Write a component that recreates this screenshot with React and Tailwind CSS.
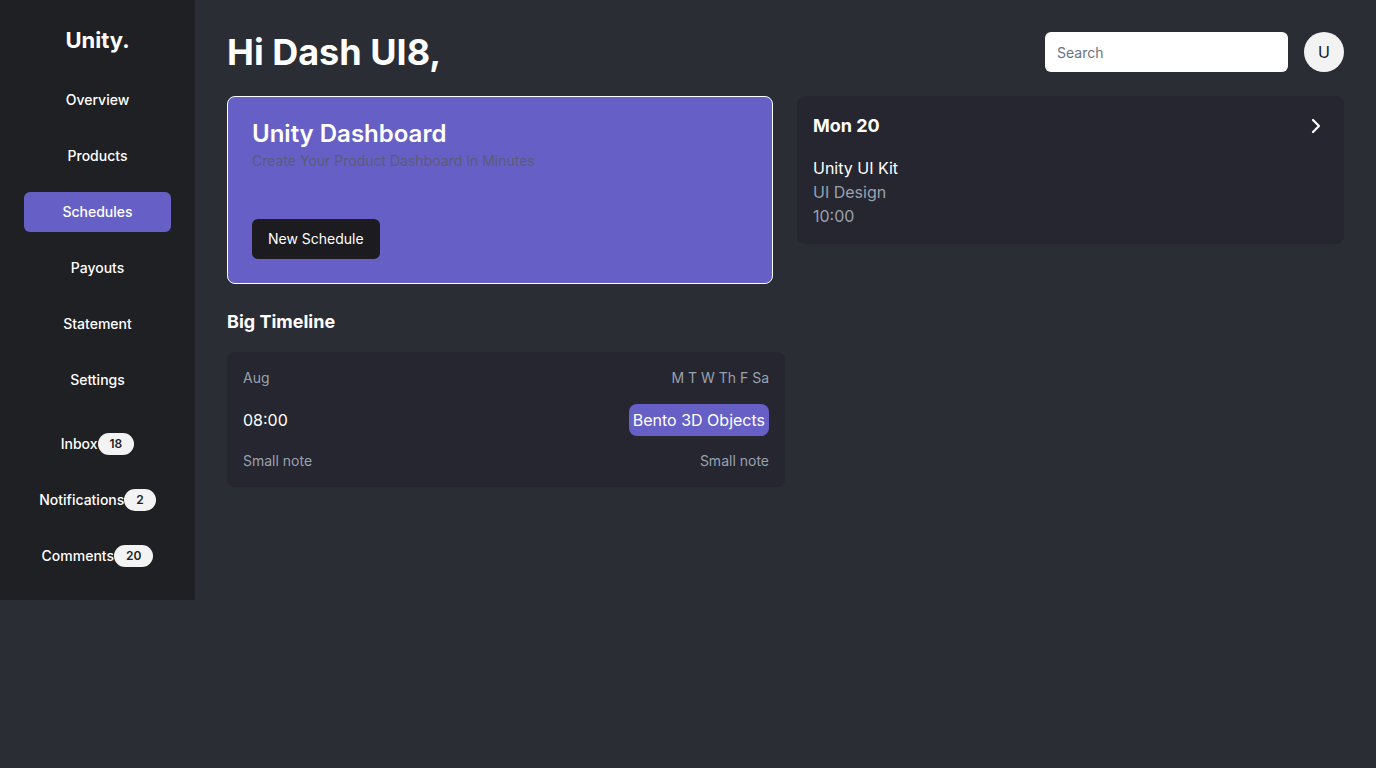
import { ChevronRight } from 'lucide-react';

const navItems = ['Overview', 'Products', 'Schedules', 'Payouts', 'Statement', 'Settings'];
const badgeItems = [
  { label: 'Inbox', count: 18 },
  { label: 'Notifications', count: 2 },
  { label: 'Comments', count: 20 },
];

const Sidebar = () => (
  <aside className="w-[195px] h-[600px] shrink-0 bg-[#1f2024] px-6 pt-[26px]">
    <div className="text-center text-[22px] font-bold text-white leading-[28px]">Unity.</div>
    <nav className="mt-[26px] flex flex-col gap-4">
      {navItems.map((item) => (
        <a
          key={item}
          className={`h-10 flex items-center justify-center rounded-md text-sm font-medium text-white ${
            item === 'Schedules' ? 'bg-[#6660c6]' : ''
          }`}
        >
          {item}
        </a>
      ))}
    </nav>
    <div className="mt-6 flex flex-col gap-4">
      {badgeItems.map(({ label, count }) => (
        <a key={label} className="h-10 flex items-center justify-center text-sm font-medium text-white">
          {label}
          <span className="h-[22px] px-3 flex items-center rounded-full bg-[#f3f3f4] text-xs font-semibold text-[#1f2024]">
            {count}
          </span>
        </a>
      ))}
    </div>
  </aside>
);

const App = () => {
  return (
    <div
      className="min-h-[768px] flex items-start bg-[#2b2d35]"
      style={{ fontFamily: 'Inter, "Noto Sans", sans-serif' }}
    >
      <Sidebar />
      <main className="flex-1 px-8 pt-8">
        <header className="flex items-center justify-between h-10">
          <h1 className="text-4xl font-bold text-white">Hi Dash UI8,</h1>
          <div className="flex items-center gap-4">
            <input
              placeholder="Search"
              className="w-[243px] h-10 rounded-md bg-white px-3 text-sm text-gray-900 placeholder:text-gray-500 outline-none"
            />
            <div className="w-10 h-10 rounded-full bg-[#f3f3f4] flex items-center justify-center text-base text-gray-900">
              U
            </div>
          </div>
        </header>

        <div className="mt-6 flex gap-6 items-start">
          <div className="w-[546px] shrink-0">
            <section className="h-[188px] rounded-lg border border-white bg-[#6660c6] p-6">
              <h2 className="text-2xl font-semibold text-white leading-[24px] mt-[1px]">Unity Dashboard</h2>
              <p className="mt-[5px] text-sm text-[#5b5b78]">Create Your Product Dashboard In Minutes</p>
              <button className="mt-[48px] h-10 px-4 rounded-md bg-[#1c1b1f] text-sm font-normal text-white">
                New Schedule
              </button>
            </section>

            <h3 className="mt-7 text-lg font-bold text-white leading-[20px]">Big Timeline</h3>
            <section className="mt-5 w-[558px] rounded-lg bg-[#25262f] px-4 py-4">
              <div className="flex justify-between text-sm text-gray-400 leading-5">
                <span>Aug</span>
                <span>M T W Th F Sa</span>
              </div>
              <div className="mt-4 flex items-center justify-between">
                <span className="text-base text-white">08:00</span>
                <span className="h-8 px-1 flex items-center rounded-lg bg-[#6660c6] text-base text-white">
                  Bento 3D Objects
                </span>
              </div>
              <div className="mt-[15px] flex justify-between text-sm text-gray-400 leading-5">
                <span>Small note</span>
                <span>Small note</span>
              </div>
            </section>
          </div>

          <section className="flex-1 h-[148px] rounded-lg bg-[#25262f] p-4">
            <div className="flex items-center justify-between h-[26px] mt-[1px]">
              <span className="text-lg font-bold text-white">Mon 20</span>
              <ChevronRight className="w-6 h-6 text-white" strokeWidth={2.2} />
            </div>
            <div className="mt-[17px] text-base leading-6">
              <div className="text-white">Unity UI Kit</div>
              <div className="text-gray-400">UI Design</div>
              <div className="text-gray-400">10:00</div>
            </div>
          </section>
        </div>
      </main>
    </div>
  );
};

export default App;
